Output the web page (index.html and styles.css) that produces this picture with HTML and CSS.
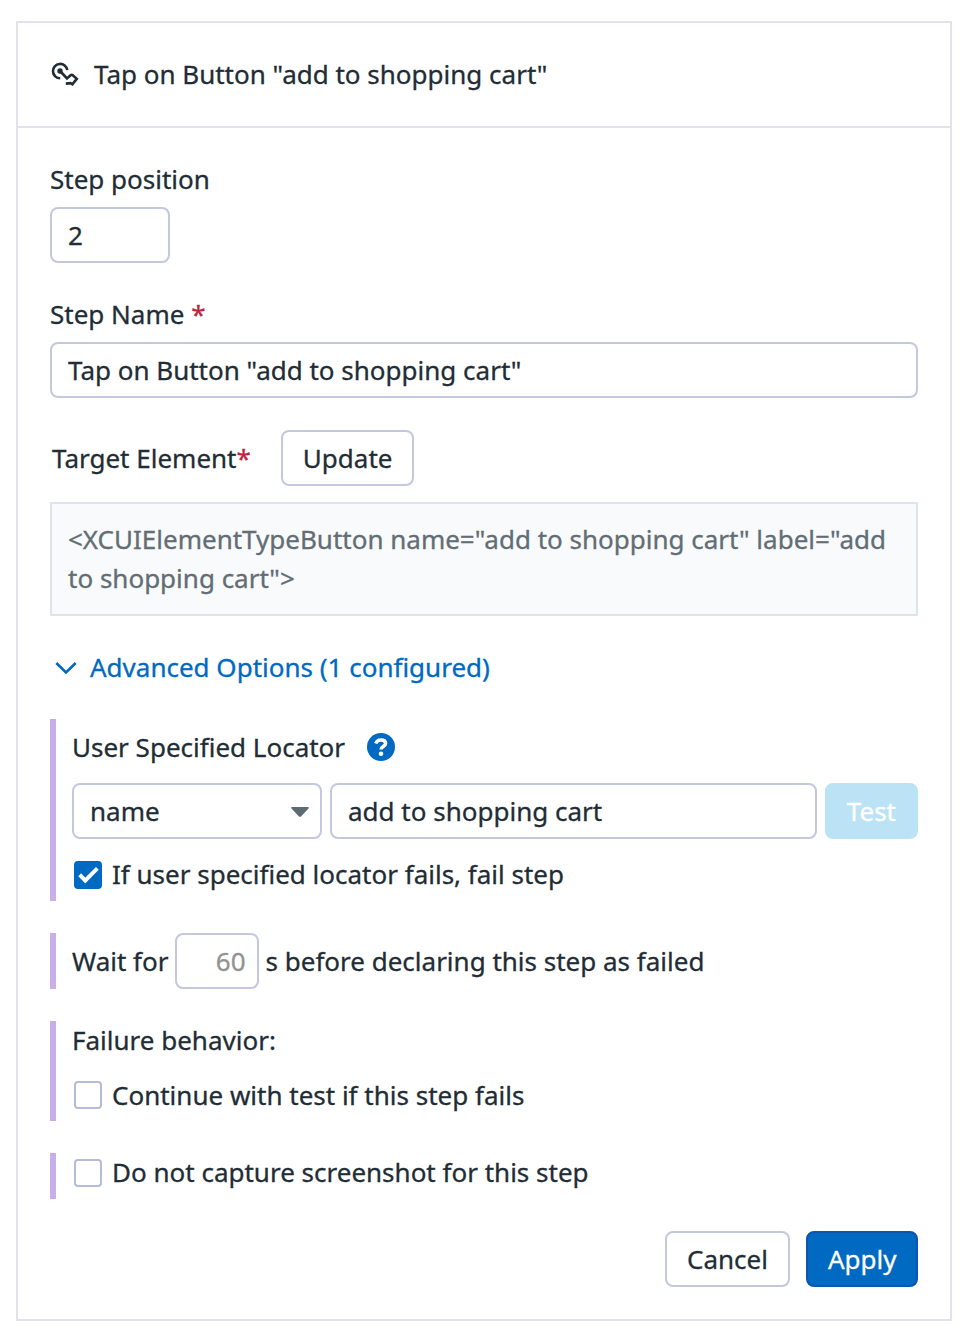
FILE: index.html
```
<!DOCTYPE html>
<html lang="en">
<head>
	<meta charset="utf-8">
	<meta name="viewport" content="width=device-width, initial-scale=1.0">
	<title>Edit step</title>
	<link rel="stylesheet" href="styles.css">
</head>
<body>

<form class="card">
	<div class="card-header">
		<svg class="tap-icon" width="28" height="26" viewBox="0 0 28 26" fill="none" stroke="#1f2d36" stroke-width="2.6">
			<path d="M9.2 16.3A7.2 7.2 0 1 1 16.3 8.2"/>
			<circle cx="9" cy="9" r="2.7" fill="#1f2d36" stroke="none"/>
			<path d="M9.5 9.5L16 16.5L19.6 13.3Q20.6 12.4 21.8 13.2L25.8 16.9L21.4 22.3L19.6 21.2L14.8 21.6"/>
		</svg>
		<span>Tap on Button "add to shopping cart"</span>
	</div>

	<div class="card-body">
		<label class="label" for="position">Step position</label>
		<input class="input position" id="position" type="text" value="2">

		<label class="label label-name" for="name">Step Name <span class="required">*</span></label>
		<input class="input" id="name" type="text" value='Tap on Button "add to shopping cart"'>

		<div class="target">
			<span>Target Element<span class="required">*</span></span>
			<button class="btn" type="button">Update</button>
		</div>
		<div class="element">&lt;XCUIElementTypeButton name="add to shopping cart" label="add to shopping cart"&gt;</div>

		<div class="advanced">
			<svg class="chevron" width="22" height="14" viewBox="0 0 22 14" fill="none" stroke="#0069c2" stroke-width="2.6">
				<path d="M1.3 2L11 11.5L20.7 2"/>
			</svg>
			<span>Advanced Options (1 configured)</span>
		</div>

		<div class="option">
			<div class="locator-title">
				<span>User Specified Locator</span>
				<svg width="28" height="28" viewBox="0 0 28 28" fill="none">
					<circle cx="14" cy="14" r="14" fill="#0069c2"/>
					<path d="M8.8 10.5C9.6 8.1 11.3 6.9 14 6.9C16.9 6.9 18.6 8.3 18.6 10.4C18.6 13.3 14.1 13.1 14.1 16.6" stroke="#fff" stroke-width="3.5"/>
					<circle cx="14" cy="20.8" r="2.3" fill="#fff"/>
				</svg>
			</div>
			<div class="locator">
				<div class="input select">
					<span>name</span>
					<svg class="caret" width="18" height="10" viewBox="0 0 18 10"><path d="M1 0H17Q18.4 .3 17.5 1.4L10.3 9.2Q9 10.3 7.7 9.2L.5 1.4Q-.4 .3 1 0Z" fill="#5f6b73"/></svg>
				</div>
				<input class="input value" type="text" value="add to shopping cart">
				<button class="btn btn-test" type="button" disabled>Test</button>
			</div>
			<label class="check check-locator">
				<input class="box" type="checkbox" checked>
				<span>If user specified locator fails, fail step</span>
			</label>
		</div>

		<div class="option wait">
			<span>Wait for</span>
			<input class="input seconds" type="text" placeholder="60">
			<span>s before declaring this step as failed</span>
		</div>

		<div class="option failure">
			<div class="failure-title">Failure behavior:</div>
			<label class="check">
				<input class="box" type="checkbox">
				<span>Continue with test if this step fails</span>
			</label>
		</div>

		<div class="option screenshot">
			<label class="check check-screenshot">
				<input class="box" type="checkbox">
				<span>Do not capture screenshot for this step</span>
			</label>
		</div>

		<div class="buttons">
			<button class="btn btn-cancel" type="button">Cancel</button>
			<button class="btn btn-apply" type="button">Apply</button>
		</div>
	</div>
</form>

</body>
</html>
```
FILE: styles.css
```
*,
*::before {
	box-sizing: border-box;
}

body {
	margin: 0;
	background: #fff;
	color: #1f2d36;
	font: 26px/38px "Noto Sans", sans-serif;
	-webkit-text-stroke: .3px;
}

.card {
	width: 936px;
	margin: 21px 0 0 16px;
	border: 2px solid #e2e2ec;
}

.card-header {
	display: flex;
	align-items: center;
	gap: 15px;
	height: 105px;
	padding: 0 32px 2px 33px;
	border-bottom: 2px solid #e2e2ec;
}

.tap-icon {
	margin-top: 2px;
}

.card-body {
	padding: 32px;
}

.label {
	display: block;
	margin-bottom: 9px;
}

.label-name {
	margin-top: 32px;
}

.required {
	color: #bc2340;
}

.input {
	display: block;
	width: 100%;
	height: 56px;
	padding: 0 16px;
	border: 2px solid #c3c8de;
	border-radius: 8px;
	background: #fff;
	color: inherit;
	font: inherit;
	outline: none;
}

.position {
	width: 120px;
}

.btn {
	height: 56px;
	padding: 0 20px;
	border: 2px solid #c3c8de;
	border-radius: 8px;
	background: #fff;
	color: inherit;
	font: inherit;
	white-space: nowrap;
}

.target {
	display: flex;
	align-items: center;
	gap: 30px;
	margin: 32px 0 16px;
	padding-left: 2px;
}

.element {
	padding: 16px;
	border: 2px solid #e0e3e9;
	background: #f9fafc;
	color: #626d74;
	line-height: 39px;
}

.advanced {
	display: flex;
	align-items: center;
	gap: 13px;
	margin: 32px 0 33px;
	padding-left: 5px;
	color: #0069c2;
}

.chevron {
	margin-top: 2px;
}

.option {
	margin-bottom: 32px;
	padding-left: 16px;
	border-left: 6px solid #c8afea;
}

.locator-title {
	display: flex;
	align-items: center;
	gap: 22px;
	height: 64px;
	padding-bottom: 8px;
}

.locator {
	display: flex;
	gap: 8px;
}

.select {
	display: flex;
	flex: none;
	align-items: center;
	justify-content: space-between;
	width: 250px;
	padding-right: 11px;
}

.caret {
	margin-top: 2px;
}

.value {
	flex: 1;
	min-width: 0;
}

.btn-test {
	border-color: #bce3f5;
	background: #bce3f5;
	color: #fff;
}

.check {
	display: flex;
	align-items: center;
	gap: 10px;
	padding-left: 2px;
}

.check-locator {
	padding-top: 16px;
	padding-bottom: 8px;
}

.check-locator .box,
.check-screenshot .box {
	margin-top: 2px;
}

.box {
	appearance: none;
	display: block;
	width: 28px;
	height: 28px;
	margin: 0;
	border: 2px solid #b5bbda;
	border-radius: 4px;
	background: #fff;
}

.box:checked {
	border-color: #0069c2;
	background: #0069c2;
}

.box:checked::before {
	content: "";
	display: block;
	width: 19px;
	height: 10px;
	margin: 5px 0 0 3px;
	border: solid #fff;
	border-width: 0 0 4px 4px;
	transform: rotate(-45deg);
}

.wait {
	display: flex;
	align-items: center;
	gap: 7px;
}

.seconds {
	width: 84px;
	margin-left: -1px;
	padding: 0 11px;
	text-align: right;
}

.seconds::placeholder {
	color: #929292;
	opacity: 1;
}

.failure {
	height: 100px;
}

.failure-title {
	margin-bottom: 17px;
}

.screenshot {
	height: 46px;
}

.buttons {
	display: flex;
	justify-content: flex-end;
	gap: 16px;
}

.btn-cancel {
	width: 125px;
}

.btn-apply {
	width: 112px;
	border-color: #0c55b0;
	background: #0069c2;
	color: #fff;
}
```
